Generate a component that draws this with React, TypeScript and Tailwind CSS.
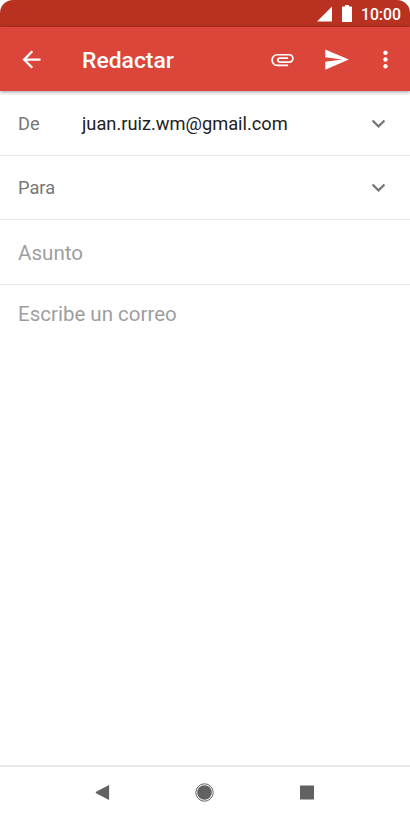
type IconProps = {
  path: string;
  className?: string;
};

const ICONS = {
  back: 'M20 11H7.83l5.59-5.59L12 4l-8 8 8 8 1.41-1.41L7.83 13H20v-2z',
  attachment:
    'M2 12.5C2 9.46 4.46 7 7.5 7H18c2.21 0 4 1.79 4 4s-1.79 4-4 4H9.5C8.12 15 7 13.88 7 12.5S8.12 10 9.5 10H17v1.5H9.41c-.85 0-.85 2 0 2H18c1.4 0 2.5-1.1 2.5-2.5S19.4 8.5 18 8.5H7.5c-2.2 0-4 1.8-4 4s1.8 4 4 4H17V18H7.5C4.46 18 2 15.54 2 12.5z',
  send: 'M2.01 21L23 12 2.01 3 2 10l15 2-15 2z',
  more: 'M12 8c1.1 0 2-.9 2-2s-.9-2-2-2-2 .9-2 2 .9 2 2 2zm0 2c-1.1 0-2 .9-2 2s.9 2 2 2 2-.9 2-2-.9-2-2-2zm0 6c-1.1 0-2 .9-2 2s.9 2 2 2 2-.9 2-2-.9-2-2-2z',
  expand: 'M16.59 8.59L12 13.17 7.41 8.59 6 10l6 6 6-6z',
};

function Icon({ path, className }: IconProps) {
  return (
    <svg viewBox="0 0 24 24" fill="currentColor" className={`size-[27px] shrink-0 ${className ?? ''}`}>
      <path d={path} />
    </svg>
  );
}

function StatusBar() {
  return (
    <div className="flex h-[27px] shrink-0 items-center justify-end rounded-t-[13px] bg-[#b93221] pr-[9px] text-white">
      <svg viewBox="0 0 16 16" fill="currentColor" className="size-4">
        <path d="M0 15.5L15 0.5v15z" />
      </svg>
      <svg viewBox="0 0 10 17" fill="currentColor" className="ml-[9px] h-[17px] w-[10px]">
        <path d="M3 0h4v1.5h2.2q.8 0 .8.8v13.9q0 .8-.8.8H.8q-.8 0-.8-.8V2.3q0-.8.8-.8H3z" />
      </svg>
      <span className="ml-[9px] pt-[2px] text-[15.8px] font-medium leading-5">10:00</span>
    </div>
  );
}

function AppBar() {
  return (
    <header className="relative flex h-16 shrink-0 items-center bg-[#dc4539] pl-[18px] pr-[11.5px] text-white shadow-[0_1px_4px_rgba(0,0,0,0.4)]">
      <Icon path={ICONS.back} />
      <h1 className="ml-[37px] flex-1 pt-[3px] text-[22.9px] font-medium leading-7">Redactar</h1>
      <Icon path={ICONS.attachment} />
      <Icon path={ICONS.send} className="ml-[27px]" />
      <Icon path={ICONS.more} className="ml-[22px]" />
    </header>
  );
}

function AddressRow({ label, value }: { label: string; value?: string }) {
  return (
    <div className="flex items-center border-b border-[#e8e8e8] pl-[18px] pr-[18.5px] text-[18.25px] leading-7">
      <span className="w-16 pt-px text-[#777]">{label}</span>
      <span className="flex-1 pt-px text-[#212121]">{value}</span>
      <Icon path={ICONS.expand} className="text-[#757575]" />
    </div>
  );
}

function NavigationBar() {
  return (
    <nav className="flex h-[55px] shrink-0 items-center justify-center gap-[81px] border-t-2 border-[#e9e9e9] pr-px pb-[2px] text-[#616161]">
      <svg viewBox="0 0 21 21" fill="currentColor" className="size-[21px]">
        <path d="M4.2 9.7L16.5 3.2q.6-.3.6.4v13.8q0 .7-.6.4L4.2 11.3q-1.2-.8 0-1.6z" />
      </svg>
      <svg viewBox="0 0 21 21" fill="currentColor" className="size-[21px]">
        <circle cx="10.5" cy="10.5" r="8.7" fill="none" stroke="currentColor" strokeWidth="1" />
        <circle cx="10.5" cy="10.5" r="7.3" />
      </svg>
      <svg viewBox="0 0 21 21" fill="currentColor" className="size-[21px]">
        <rect x="4" y="3.5" width="14" height="14" rx=".4" />
      </svg>
    </nav>
  );
}

export default function App() {
  return (
    <div className="flex h-[820px] w-[410px] flex-col bg-white font-['Roboto',sans-serif]">
      <StatusBar />
      <AppBar />
      <main className="flex flex-1 flex-col">
        <div className="grid grid-rows-[65px_64px]">
          <AddressRow label="De" value="juan.ruiz.wm@gmail.com" />
          <AddressRow label="Para" />
        </div>
        <div className="flex h-[65px] items-center border-b border-[#e8e8e8] px-[18px] pt-[3px] text-[20.6px] text-[#9e9e9e]">
          Asunto
        </div>
        <div className="px-[18px] pt-[14px] text-[20.5px] leading-[30px] text-[#9e9e9e]">
          Escribe un correo
        </div>
      </main>
      <NavigationBar />
    </div>
  );
}
